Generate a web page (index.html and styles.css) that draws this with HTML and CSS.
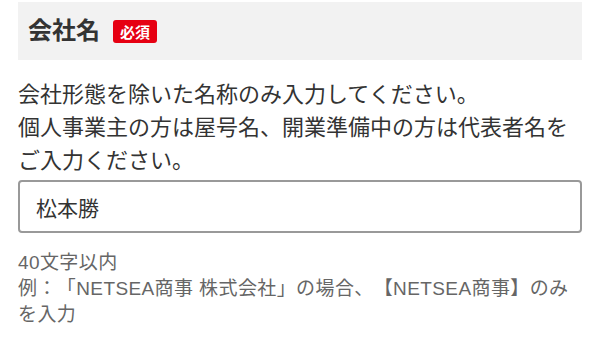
FILE: index.html
```html
<!DOCTYPE html>
<html lang="ja">
<head>
    <meta charset="UTF-8">
    <meta name="viewport" content="width=device-width, initial-scale=1.0">
    <title>会社名</title>
    <link rel="stylesheet" href="styles.css">
</head>
<body>
    <div class="field">
        <div class="field-head">
            <h2 class="field-title">会社名</h2>
            <span class="required">必須</span>
        </div>

        <p class="field-desc">会社形態を除いた名称のみ入力してください。<br>個人事業主の方は屋号名、開業準備中の方は代表者名をご入力ください。</p>

        <input class="field-input" type="text" value="松本勝">

        <div class="field-note">
            <p>40文字以内</p>
            <p>例：「NETSEA商事 株式会社」の場合、【NETSEA商事】のみを入力</p>
        </div>
    </div>
</body>
</html>
```

FILE: styles.css
```css
* {
    margin: 0;
    padding: 0;
    box-sizing: border-box;
}

body {
    font-family: 'Liberation Sans', 'Noto Sans CJK JP', sans-serif;
    background: white;
    color: #333;
    text-spacing-trim: space-all;
}

.field {
    padding: 2px 18px 0;
}

.field-head {
    display: flex;
    align-items: center;
    gap: 13px;
    height: 58px;
    padding-left: 10px;
    background: #f2f2f2;
}

.field-title {
    font-size: 24px;
    font-weight: bold;
    color: #333;
    line-height: 1;
}

.required {
    display: inline-flex;
    align-items: center;
    justify-content: center;
    width: 44px;
    height: 23px;
    background: #e60012;
    color: white;
    font-size: 15px;
    font-weight: bold;
    border-radius: 3px;
}

.field-desc {
    margin-top: 18px;
    font-size: 22px;
    line-height: 33px;
    color: #333;
}

.field-input {
    display: block;
    width: 100%;
    height: 53px;
    margin-top: 3px;
    padding: 0 16px;
    border: 2px solid #999;
    border-radius: 4px;
    font-family: inherit;
    font-size: 21px;
    color: #333;
    background: white;
    outline: none;
}

.field-note {
    margin-top: 17px;
    font-size: 19px;
    line-height: 26px;
    letter-spacing: 0.4px;
    color: #666;
}
```
